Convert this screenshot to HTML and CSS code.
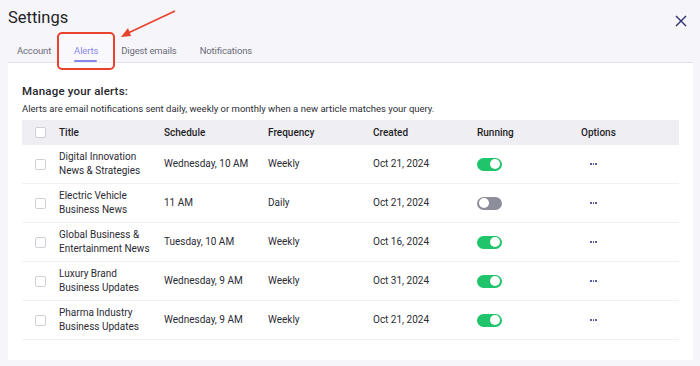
FILE: index.html
```html
<!DOCTYPE html>
<html lang="en">
  <head>
    <meta charset="UTF-8" />
    <title>Settings</title>
    <link rel="stylesheet" href="styles.css">
  </head>
  <body>
    <div class="page">
      <header class="top">
        <h1>Settings</h1>
        <button class="close" aria-label="Close">
          <svg width="12" height="12" viewBox="0 0 12 12"><path d="M1 1L11 11M11 1L1 11" stroke="#2b2f6e" stroke-width="1.4" fill="none"/></svg>
        </button>
      </header>

      <nav class="tabs">
        <a class="tab">Account</a>
        <a class="tab active">Alerts</a>
        <a class="tab">Digest emails</a>
        <a class="tab">Notifications</a>
      </nav>

      <!-- annotation around the active tab -->
      <div class="mark"></div>
      <svg class="arrow" width="60" height="32" viewBox="0 0 60 32">
        <path d="M55 1L6 24" stroke="#e8412c" stroke-width="1.6" fill="none"/>
        <path d="M1 27L8 18L11 26Z" fill="#e8412c"/>
      </svg>

      <section class="panel">
        <h2>Manage your alerts:</h2>
        <p class="hint">Alerts are email notifications sent daily, weekly or monthly when a new article matches your query.</p>

        <div class="grid">
          <div class="row head">
            <span><i class="check"></i></span>
            <span>Title</span>
            <span>Schedule</span>
            <span>Frequency</span>
            <span>Created</span>
            <span>Running</span>
            <span>Options</span>
          </div>

          <div class="row">
            <span><i class="check"></i></span>
            <span>Digital Innovation<br>News &amp; Strategies</span>
            <span>Wednesday, 10 AM</span>
            <span>Weekly</span>
            <span>Oct 21, 2024</span>
            <span><i class="toggle on"></i></span>
            <span class="dots"><b></b><b></b><b></b></span>
          </div>

          <div class="row">
            <span><i class="check"></i></span>
            <span>Electric Vehicle<br>Business News</span>
            <span>11 AM</span>
            <span>Daily</span>
            <span>Oct 21, 2024</span>
            <span><i class="toggle"></i></span>
            <span class="dots"><b></b><b></b><b></b></span>
          </div>

          <div class="row">
            <span><i class="check"></i></span>
            <span>Global Business &amp;<br>Entertainment News</span>
            <span>Tuesday, 10 AM</span>
            <span>Weekly</span>
            <span>Oct 16, 2024</span>
            <span><i class="toggle on"></i></span>
            <span class="dots"><b></b><b></b><b></b></span>
          </div>

          <div class="row">
            <span><i class="check"></i></span>
            <span>Luxury Brand<br>Business Updates</span>
            <span>Wednesday, 9 AM</span>
            <span>Weekly</span>
            <span>Oct 31, 2024</span>
            <span><i class="toggle on"></i></span>
            <span class="dots"><b></b><b></b><b></b></span>
          </div>

          <div class="row">
            <span><i class="check"></i></span>
            <span>Pharma Industry<br>Business Updates</span>
            <span>Wednesday, 9 AM</span>
            <span>Weekly</span>
            <span>Oct 21, 2024</span>
            <span><i class="toggle on"></i></span>
            <span class="dots"><b></b><b></b><b></b></span>
          </div>
        </div>
      </section>
    </div>
  </body>
</html>
```

FILE: styles.css
```css
body {
  margin: 0;
  background-color: #f6f5fa;
  font-family: Roboto, "Noto Sans", sans-serif;
  color: #26262e;
}

.page {
  position: relative;
  padding: 0 7px 7px 8px;
}

.top {
  display: flex;
  justify-content: space-between;
  align-items: center;
  height: 34px;
}

h1 {
  margin: 0;
  font-size: 16.5px;
  font-weight: 400;
  color: #1f1f27;
}

.close {
  background: none;
  border: 0;
  padding: 0;
  margin: 10px 6px 0 0;
  cursor: pointer;
}

.tabs {
  display: flex;
  gap: 23px;
  padding-left: 9px;
  height: 28px;
  border-bottom: 1px solid #e2e2ea;
}

.tab {
  position: relative;
  font-size: 9.5px;
  letter-spacing: -0.15px;
  color: #6c6c78;
  line-height: 33px;
}

.tab.active {
  color: #4747e0;
}

.tab.active::after {
  content: "";
  position: absolute;
  left: 0;
  right: 1px;
  bottom: 0;
  height: 2.5px;
  border-radius: 2px;
  background-color: #4747e0;
}

.mark {
  position: absolute;
  left: 57px;
  top: 32px;
  width: 54px;
  height: 34px;
  border: 2px solid #e8412c;
  border-radius: 5px;
  background-color: rgba(255, 255, 255, 0.35);
}

.arrow {
  position: absolute;
  left: 120px;
  top: 10px;
}

.panel {
  background-color: #ffffff;
  padding: 14px 14px 20px 14px;
}

h2 {
  margin: 7px 0 0 0;
  font-size: 11.5px;
  font-weight: 500;
  letter-spacing: 0.2px;
}

.hint {
  margin: 5px 0 6px 0;
  font-size: 9.5px;
  color: #2d2d35;
}

.row {
  display: grid;
  grid-template-columns: 37px 105px 104px 105px 104px 104px 1fr;
  align-items: center;
  height: 38px;
  border-bottom: 1px solid #f0eff4;
  font-size: 10px;
  line-height: 14px;
  color: #2b2b33;
}

.row.head {
  height: 25px;
  background-color: #efeef3;
  border-bottom: 0;
  font-weight: 500;
  color: #1f1f27;
}

.check {
  display: block;
  width: 9px;
  height: 9px;
  margin-left: 13px;
  border: 1px solid #cfcfd6;
  border-radius: 2px;
  background-color: #ffffff;
}

.toggle {
  position: relative;
  display: block;
  width: 25px;
  height: 13px;
  border-radius: 7px;
  background-color: #8e8e9a;
}

.toggle::after {
  content: "";
  position: absolute;
  top: 1.5px;
  left: 2px;
  width: 10px;
  height: 10px;
  border-radius: 50%;
  background-color: #ffffff;
}

.toggle.on {
  background-color: #1fc46b;
}

.toggle.on::after {
  left: 13px;
}

.dots {
  display: flex;
  gap: 1px;
  padding-left: 9px;
}

.dots b {
  width: 1.6px;
  height: 1.6px;
  border-radius: 50%;
  background-color: #3a3c94;
}
```
